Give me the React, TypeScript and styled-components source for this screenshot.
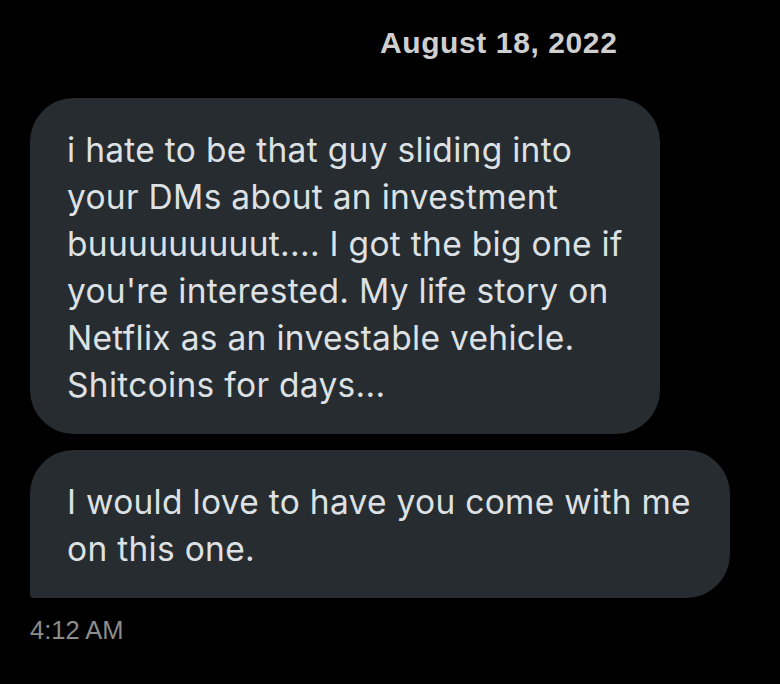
import React from "react";
import styled, { createGlobalStyle } from "styled-components";

const Global = createGlobalStyle`
  html, body { margin: 0; padding: 0; background: #000; }
  #root { min-height: 684px; }
`;

const Page = styled.div`
  width: 780px;
  min-height: 684px;
  background: #000;
  display: flex;
  flex-direction: column;
  padding-top: 25px;
  box-sizing: border-box;
`;

const DateRow = styled.div`
  padding-left: 380px;
  font-family: "Liberation Sans", Arial, sans-serif;
  font-weight: 700;
  font-size: 30px;
  line-height: 36px;
  letter-spacing: 0.6px;
  color: #cfcfcf;
`;

const Thread = styled.div`
  display: flex;
  flex-direction: column;
  align-items: flex-start;
  gap: 16px;
  padding: 0 30px;
  margin-top: 37px;
`;

const Bubble = styled.div<{ $width: number; $tail?: boolean }>`
  width: ${(p) => p.$width}px;
  box-sizing: border-box;
  background: #272c31;
  color: #dde1e4;
  border-radius: ${(p) => (p.$tail ? "44px 44px 44px 4px" : "44px")};
  padding: 29px 8px 25px 37px;
  font-family: Inter, Roboto, "Liberation Sans", sans-serif;
  font-size: 33.5px;
  line-height: 47px;
  letter-spacing: 0.3px;
  white-space: pre-line;
`;

const Time = styled.div`
  margin: 18px 0 0 30px;
  font-family: "Liberation Sans", Arial, sans-serif;
  font-size: 25.5px;
  line-height: 28px;
  color: #8c8c8c;
`;

const first = [
  "i hate to be that guy sliding into",
  "your DMs about an investment",
  "buuuuuuuuut.... I got the big one if",
  "you're interested. My life story on",
  "Netflix as an investable vehicle.",
  "Shitcoins for days...",
].join("\n");

const second = ["I would love to have you come with me", "on this one."].join("\n");

export default function App() {
  return (
    <>
      <Global />
      <Page>
        <DateRow>August 18, 2022</DateRow>
        <Thread>
          <Bubble $width={630}>{first}</Bubble>
          <Bubble $width={700} $tail>
            {second}
          </Bubble>
        </Thread>
        <Time>4:12 AM</Time>
      </Page>
    </>
  );
}
